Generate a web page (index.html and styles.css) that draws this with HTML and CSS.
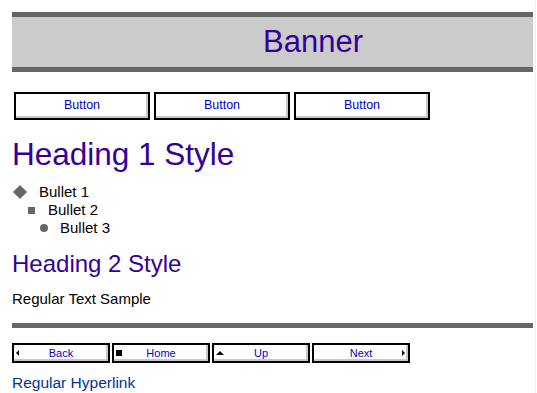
FILE: index.html
```html
<!DOCTYPE html>
<html lang="en">

<head>
    <meta charset="utf-8" />
    <title>Theme Preview</title>
    <link rel="stylesheet" href="styles.css">
</head>

<body>
    <div class="banner"><span class="banner-title">Banner</span></div>

    <div class="buttons">
        <a class="btn" href="#">Button</a>
        <a class="btn" href="#">Button</a>
        <a class="btn" href="#">Button</a>
    </div>

    <h1>Heading 1 Style</h1>

    <ul class="bullets">
        <li class="lvl1"><span class="mark"><i class="diamond"></i></span>Bullet 1</li>
        <li class="lvl2"><span class="mark square"></span>Bullet 2</li>
        <li class="lvl3"><span class="mark circle"></span>Bullet 3</li>
    </ul>

    <h2>Heading 2 Style</h2>

    <p class="text">Regular Text Sample</p>

    <div class="rule"></div>

    <div class="nav">
        <a class="nav-btn" href="#"><span class="ico ico-back"></span><span class="label">Back</span><span></span></a>
        <a class="nav-btn" href="#"><span class="ico ico-home"></span><span class="label">Home</span><span></span></a>
        <a class="nav-btn" href="#"><span class="ico ico-up"></span><span class="label">Up</span><span></span></a>
        <a class="nav-btn" href="#"><span></span><span class="label">Next</span><span class="ico ico-next"></span></a>
    </div>

    <a class="link" href="#">Regular Hyperlink</a>
</body>

</html>
```

FILE: styles.css
```css
html {
    background: #fff;
}

body {
    margin: 12px 4px 0 12px;
    font-family: 'Liberation Sans', Arial, sans-serif;
    font-size: 15px;
    color: #000;
}

body::after {
    content: '';
    position: fixed;
    top: 0;
    bottom: 0;
    right: 1px;
    width: 1px;
    background: #f7f2c4;
}

/* banner */
.banner {
    border-top: 5px solid #666;
    border-bottom: 5px solid #666;
    background-color: #cbcbcb;
    height: 50px;
    padding-left: 251px;
}

.banner-title {
    font-size: 31px;
    line-height: 50px;
    color: #330099;
}

/* top buttons */
.buttons {
    display: flex;
    gap: 4px;
    margin-top: 20px;
    margin-left: 2px;
}

.btn {
    box-sizing: border-box;
    width: 136px;
    height: 28px;
    border: 2px solid #000;
    box-shadow: inset -2px -2px 0 #c8c8c8;
    background: #fff;
    color: #0000cc;
    font-size: 12.5px;
    line-height: 23px;
    text-align: center;
    text-decoration: none;
}

h1 {
    margin: 16px 0 0;
    font-size: 31.5px;
    font-weight: normal;
    line-height: 36px;
    color: #330099;
}

/* bullet list */
.bullets {
    list-style: none;
    margin: 11px 0 0;
    padding: 0;
}

.bullets li {
    display: flex;
    align-items: center;
    height: 18px;
    line-height: 18px;
}

.lvl2 {
    padding-left: 16px;
}

.lvl3 {
    padding-left: 28px;
}

.mark {
    flex: none;
    background: #666;
}

.lvl1 .mark {
    width: 15px;
    height: 15px;
    margin-right: 12px;
    background: none;
    display: flex;
    align-items: center;
    justify-content: center;
}

.diamond {
    display: block;
    width: 10px;
    height: 10px;
    background: #666;
    transform: rotate(45deg);
}

.square {
    width: 7px;
    height: 7px;
    margin-right: 13px;
}

.circle {
    width: 8px;
    height: 8px;
    border-radius: 50%;
    margin-right: 12px;
}

h2 {
    margin: 13px 0 0;
    font-size: 24px;
    font-weight: normal;
    line-height: 28px;
    color: #330099;
}

.text {
    margin: 12px 0 0;
    line-height: 18px;
}

.rule {
    margin-top: 15px;
    height: 5px;
    background: #666;
}

/* navigation */
.nav {
    display: flex;
    gap: 2px;
    margin-top: 15px;
}

.nav-btn {
    box-sizing: border-box;
    width: 98px;
    height: 20px;
    border: 2px solid #000;
    box-shadow: inset -2px -2px 0 #c8c8c8;
    display: grid;
    grid-template-columns: 12px 1fr 12px;
    align-items: center;
    color: #0000cc;
    font-size: 11px;
    text-decoration: none;
}

.label {
    text-align: center;
}

.ico {
    justify-self: start;
    margin-left: 2px;
}

.ico-back {
    border-right: 3px solid #000;
    border-top: 3px solid transparent;
    border-bottom: 3px solid transparent;
}

.ico-home {
    width: 6px;
    height: 6px;
    background: #000;
}

.ico-up {
    border-bottom: 4px solid #000;
    border-left: 4px solid transparent;
    border-right: 4px solid transparent;
}

.ico-next {
    justify-self: end;
    margin: 0 3px 0 0;
    border-left: 3px solid #000;
    border-top: 3px solid transparent;
    border-bottom: 3px solid transparent;
}

.link {
    display: block;
    margin-top: 11px;
    font-size: 15.5px;
    line-height: 18px;
    color: #003399;
    text-decoration: none;
}
```
